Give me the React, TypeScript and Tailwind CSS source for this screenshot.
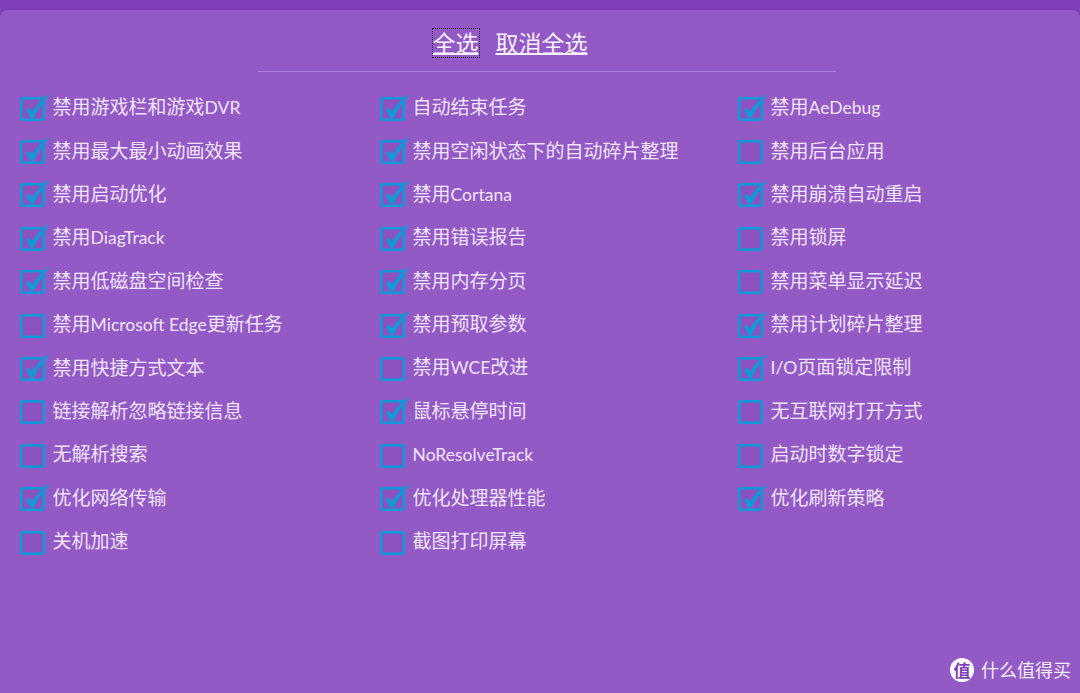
const font = { fontFamily: 'Lato,"Noto Sans CJK SC",sans-serif' };

type Item = [string, boolean];

const col1: Item[] = [
  ["禁用游戏栏和游戏DVR", true],
  ["禁用最大最小动画效果", true],
  ["禁用启动优化", true],
  ["禁用DiagTrack", true],
  ["禁用低磁盘空间检查", true],
  ["禁用Microsoft Edge更新任务", false],
  ["禁用快捷方式文本", true],
  ["链接解析忽略链接信息", false],
  ["无解析搜索", false],
  ["优化网络传输", true],
  ["关机加速", false],
];
const col2: Item[] = [
  ["自动结束任务", true],
  ["禁用空闲状态下的自动碎片整理", true],
  ["禁用Cortana", true],
  ["禁用错误报告", true],
  ["禁用内存分页", true],
  ["禁用预取参数", true],
  ["禁用WCE改进", false],
  ["鼠标悬停时间", true],
  ["NoResolveTrack", false],
  ["优化处理器性能", true],
  ["截图打印屏幕", false],
];
const col3: Item[] = [
  ["禁用AeDebug", true],
  ["禁用后台应用", false],
  ["禁用崩溃自动重启", true],
  ["禁用锁屏", false],
  ["禁用菜单显示延迟", false],
  ["禁用计划碎片整理", true],
  ["I/O页面锁定限制", true],
  ["无互联网打开方式", false],
  ["启动时数字锁定", false],
  ["优化刷新策略", true],
];

function Check({ on }: { on: boolean }) {
  return (
    <svg width="32" height="30" viewBox="0 0 32 30" className="mt-[2px] shrink-0" fill="none">
      <rect x="2.3" y="4.3" width="22.4" height="21.4" rx="2" fill="#8d52c0" stroke="#0c9ad9" strokeWidth="2.6" />
      {on && (
        <path
          d="M7 15.5 L10.5 14 L13 17.5 C17 11 22 6 29 0.5 L30 1.5 C24 8 19 15 14.5 24 L11.5 24 Z"
          fill="#0c9ad9"
        />
      )}
    </svg>
  );
}

function Label({ text }: { text: string }) {
  const parts = text.split(/([A-Za-z/ ]+)/).filter(Boolean);
  return (
    <span className="mb-[2px] ml-[1.6px] whitespace-nowrap text-[19px] leading-none text-[#f0e4fb]">
      {parts.map((p, i) =>
        /^[A-Za-z/ ]+$/.test(p) ? (
          <span key={i} className="text-[17.5px]">
            {p}
          </span>
        ) : (
          <span key={i}>{p}</span>
        ),
      )}
    </span>
  );
}

function Row({ item }: { item: Item }) {
  return (
    <div className="flex h-[43.4px] items-center">
      <Check on={item[1]} />
      <Label text={item[0]} />
    </div>
  );
}

function Column({ items, className }: { items: Item[]; className: string }) {
  return (
    <div className={className}>
      {items.map((it) => (
        <Row key={it[0]} item={it} />
      ))}
    </div>
  );
}

export default function App() {
  return (
    <div className="relative h-[693px] w-[1080px] overflow-hidden bg-[#7f3fb8]" style={font}>
      <div className="mt-[10px] h-[683px] rounded-t-[8px] bg-[#935ac5]">
        <div className="flex h-[61px] items-center justify-center pr-[60px] pt-[4px] text-[23px] leading-[28px] text-[#f8f0ff]">
          <span className="underline underline-offset-[1px] outline-1 outline-dotted outline-[#1d2a1d]">全选</span>
          <span className="ml-[17px] underline underline-offset-[1px]">取消全选</span>
        </div>
        <div className="ml-[258px] h-[1px] w-[578px] bg-[#ae80dc]" />
        <div className="flex pl-[19px] pt-[14px]">
          <Column items={col1} className="w-[360px]" />
          <Column items={col2} className="w-[358px]" />
          <Column items={col3} className="w-[300px]" />
        </div>
      </div>
      <div className="absolute left-[950px] top-[658px] flex items-center text-white">
        <div className="flex h-[24px] w-[24px] items-center justify-center rounded-full bg-white text-[17px] font-bold leading-none text-[#7f3fb8]">值</div>
        <span className="ml-[7px] text-[18px] leading-none text-[#f3ecfa]">什么值得买</span>
      </div>
    </div>
  );
}
